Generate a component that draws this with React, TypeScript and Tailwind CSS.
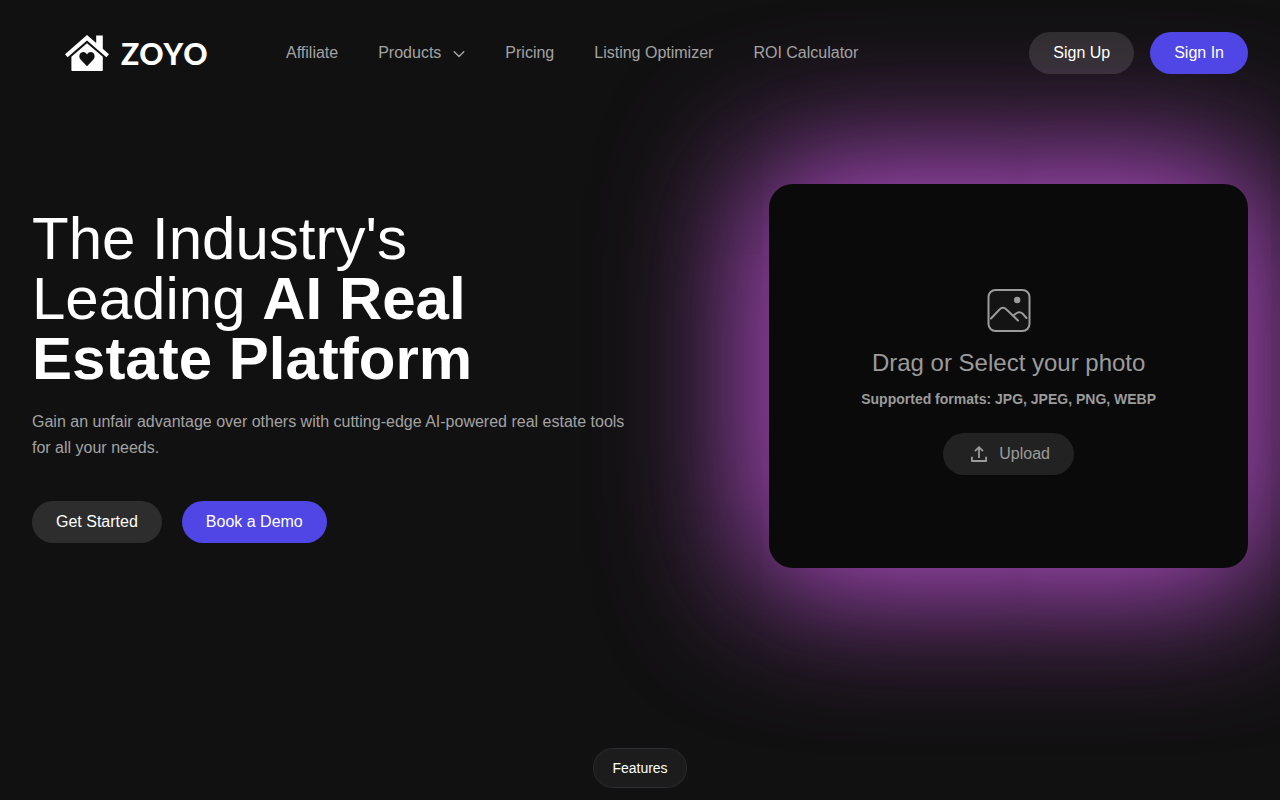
import type { ReactNode } from "react";

const navLinks = [
  { label: "Affiliate", href: "#affiliate" },
  { label: "Products", href: "#products", menu: true },
  { label: "Pricing", href: "#pricing" },
  { label: "Listing Optimizer", href: "#listing-optimizer" },
  { label: "ROI Calculator", href: "#roi-calculator" },
];

function Logo() {
  return (
    <a href="#home" className="flex items-center gap-3 text-white">
      <svg
        width="44"
        height="36"
        viewBox="0 0 44 36"
        fill="currentColor"
        className="shrink-0"
      >
        <path d="M22 0 31.2 8V.4h6.600v13.400l6.200 5.400-2.600 3.100L22 5.500 2.600 22.300 0 19.200Z" />
        <path
          fillRule="evenodd"
          d="M22 8.200 37.800 21.800V35.200Q37.800 36 37 36H7.200Q6.400 36 6.400 35.200V21.800ZM22 31.200l6.200-6.400c3-3.300.9-7.800-2.500-7.800-1.700 0-3 .9-3.700 2.500-.7-1.600-2-2.500-3.700-2.500-3.400 0-5.500 4.500-2.500 7.800Z"
        />
      </svg>
      <span className="w-[90px] font-[Lato] text-[30px] leading-9 font-black [font-kerning:none]">
        ZOYO
      </span>
    </a>
  );
}

function PillButton({
  primary,
  children,
}: {
  primary?: boolean;
  children: ReactNode;
}) {
  return (
    <button
      type="button"
      className={`h-[42px] rounded-full px-6 text-base whitespace-nowrap text-white ${
        primary ? "bg-[#4f46e5]" : "bg-white/12"
      }`}
    >
      {children}
    </button>
  );
}

function Header() {
  return (
    <header className="relative z-10 flex items-center justify-between px-8 pt-8">
      <div className="flex items-center gap-[75px] pl-[33px]">
        <Logo />

        <nav className="flex items-center gap-10 text-base text-[#a3a3a3]">
          {navLinks.map((link) => (
            <a
              key={link.label}
              href={link.href}
              className="flex items-center gap-3 whitespace-nowrap"
            >
              {link.label}
              {link.menu && (
                <svg
                  width="12"
                  height="12"
                  viewBox="0 0 12 12"
                  fill="none"
                  stroke="currentColor"
                  strokeWidth="1.5"
                  strokeLinecap="round"
                  strokeLinejoin="round"
                >
                  <path d="M1.200 4.800 6 9.500l4.800-4.700" />
                </svg>
              )}
            </a>
          ))}
        </nav>
      </div>

      <div className="flex items-center gap-4">
        <PillButton>Sign Up</PillButton>
        <PillButton primary>Sign In</PillButton>
      </div>
    </header>
  );
}

function UploadCard() {
  return (
    <div className="col-span-5 flex h-96 flex-col items-center justify-center rounded-3xl bg-[#0a0a0a] pt-3 text-[#9b9b9b] shadow-[0_0_140px_20px_rgba(196,84,220,0.96)]">
      <svg
        width="44"
        height="44"
        viewBox="0 0 44 44"
        fill="none"
        stroke="currentColor"
        strokeWidth="2"
        strokeLinecap="round"
      >
        <rect x="1.500" y="1" width="41" height="41" rx="7" fill="#141414" />
        <path d="M4 29.500 12.500 20.500Q16 17 19.500 20.500L31 31.500M26.500 26.500 29 24.500Q32.500 22 35.500 24.500L39.500 29" />
        <circle cx="30.200" cy="11" r="3.200" fill="currentColor" stroke="none" />
      </svg>

      <h2 className="mt-[14px] text-2xl leading-8">Drag or Select your photo</h2>

      <p className="mt-[10px] text-sm leading-5 font-bold">
        Supported formats: JPG, JPEG, PNG, WEBP
      </p>

      <button
        type="button"
        className="mt-6 flex h-[42px] items-center gap-2 rounded-full bg-[#222222] px-6 text-base"
      >
        <svg
          width="24"
          height="24"
          viewBox="0 0 24 24"
          fill="none"
          stroke="currentColor"
          strokeWidth="1.800"
          strokeLinejoin="round"
        >
          <path d="M12 16V5.500M8 9.200 12 5.200 16 9.200M4.900 14.800v4.200h14.200v-4.200" />
        </svg>
        Upload
      </button>
    </div>
  );
}

export default function App() {
  return (
    <div className="min-h-screen overflow-hidden bg-[#111111] font-['Liberation_Sans',Arial,sans-serif]">
      <Header />

      <main>
        <section className="grid grid-cols-12 items-center gap-x-12 px-8 pt-[110px]">
          <div className="col-span-7">
            <h1 className="max-w-xl text-6xl leading-[60px] text-white">
              The Industry's Leading <b>AI Real Estate Platform</b>
            </h1>

            <p className="mt-5 max-w-[600px] text-base leading-[26px] text-[#a3a3a3]">
              Gain an unfair advantage over others with cutting-edge AI-powered
              real estate tools for all your needs.
            </p>

            <div className="mt-10 flex gap-5">
              <PillButton>Get Started</PillButton>
              <PillButton primary>Book a Demo</PillButton>
            </div>
          </div>

          <UploadCard />
        </section>

        <section className="relative flex justify-center pt-[180px] pb-3">
          <span className="flex h-10 items-center rounded-full border border-[#2c2c33] bg-[#1c1c1c] px-[18px] text-sm text-white">
            Features
          </span>
        </section>
      </main>
    </div>
  );
}
